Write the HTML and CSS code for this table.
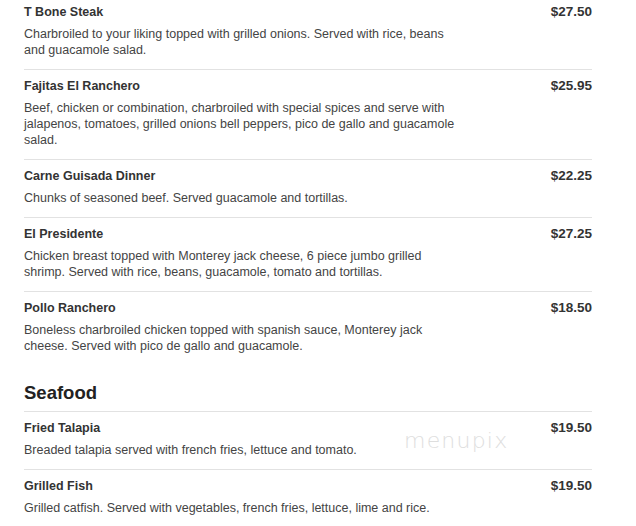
FILE: index.html
```html
<!DOCTYPE html>
<html lang="en">
<head>
<meta charset="utf-8">
<title>Menu</title>
<link rel="stylesheet" href="styles.css">
</head>
<body>
<main class="menu">
  <section class="section">
    <ul class="items">
      <li class="item">
        <div class="info">
          <h3 class="name">T Bone Steak</h3>
          <p class="desc">Charbroiled to your liking topped with grilled onions. Served with rice, beans and guacamole salad.</p>
        </div>
        <span class="price">$27.50</span>
      </li>
      <li class="item">
        <div class="info">
          <h3 class="name">Fajitas El Ranchero</h3>
          <p class="desc">Beef, chicken or combination, charbroiled with special spices and serve with jalapenos, tomatoes, grilled onions bell peppers, pico de gallo and guacamole salad.</p>
        </div>
        <span class="price">$25.95</span>
      </li>
      <li class="item">
        <div class="info">
          <h3 class="name">Carne Guisada Dinner</h3>
          <p class="desc">Chunks of seasoned beef. Served guacamole and tortillas.</p>
        </div>
        <span class="price">$22.25</span>
      </li>
      <li class="item">
        <div class="info">
          <h3 class="name">El Presidente</h3>
          <p class="desc">Chicken breast topped with Monterey jack cheese, 6 piece jumbo grilled shrimp. Served with rice, beans, guacamole, tomato and tortillas.</p>
        </div>
        <span class="price">$27.25</span>
      </li>
      <li class="item">
        <div class="info">
          <h3 class="name">Pollo Ranchero</h3>
          <p class="desc">Boneless charbroiled chicken topped with spanish sauce, Monterey jack cheese. Served with pico de gallo and guacamole.</p>
        </div>
        <span class="price">$18.50</span>
      </li>
    </ul>
  </section>
  <section class="section">
    <h2 class="section-title">Seafood</h2>
    <ul class="items">
      <li class="item">
        <div class="info">
          <h3 class="name">Fried Talapia</h3>
          <p class="desc">Breaded talapia served with french fries, lettuce and tomato.</p>
        </div>
        <span class="price">$19.50</span>
      </li>
      <li class="item">
        <div class="info">
          <h3 class="name">Grilled Fish</h3>
          <p class="desc">Grilled catfish. Served with vegetables, french fries, lettuce, lime and rice.</p>
        </div>
        <span class="price">$19.50</span>
      </li>
    </ul>
  </section>
</main>
<div class="watermark">menupix</div>
</body>
</html>
```
FILE: styles.css
```css
html, body {
  margin: 0;
  padding: 0;
  background: #ffffff;
}

body {
  font-family: "Liberation Sans", Arial, sans-serif;
  color: #333333;
  overflow: hidden;
}

.menu {
  width: 568px;
  margin: -4px 0 0 24px;
}

.items {
  list-style: none;
  margin: 0;
  padding: 0;
}

.item {
  display: flex;
  justify-content: space-between;
  align-items: flex-start;
  padding: 7px 0 11px;
  border-bottom: 1px solid #e2e2e2;
}

.section:first-child .item:last-child {
  border-bottom: none;
}

.info {
  width: 440px;
}

.name {
  margin: 0;
  font-size: 12.5px;
  line-height: 18px;
  font-weight: bold;
  color: #333333;
}

.desc {
  margin: 5px 0 0;
  font-size: 12.5px;
  line-height: 16px;
  color: #444444;
}

.price {
  font-size: 13.5px;
  line-height: 18px;
  font-weight: bold;
  color: #333333;
}

.section-title {
  margin: 17px 0 0;
  padding-bottom: 7px;
  font-size: 18.5px;
  line-height: 22px;
  font-weight: bold;
  color: #222222;
  border-bottom: 1px solid #e2e2e2;
}

.watermark {
  position: absolute;
  left: 404px;
  top: 429px;
  font-family: "DejaVu Sans", sans-serif;
  font-weight: 200;
  font-size: 22px;
  line-height: 24px;
  letter-spacing: 1.2px;
  color: #dedede;
  pointer-events: none;
}
```
